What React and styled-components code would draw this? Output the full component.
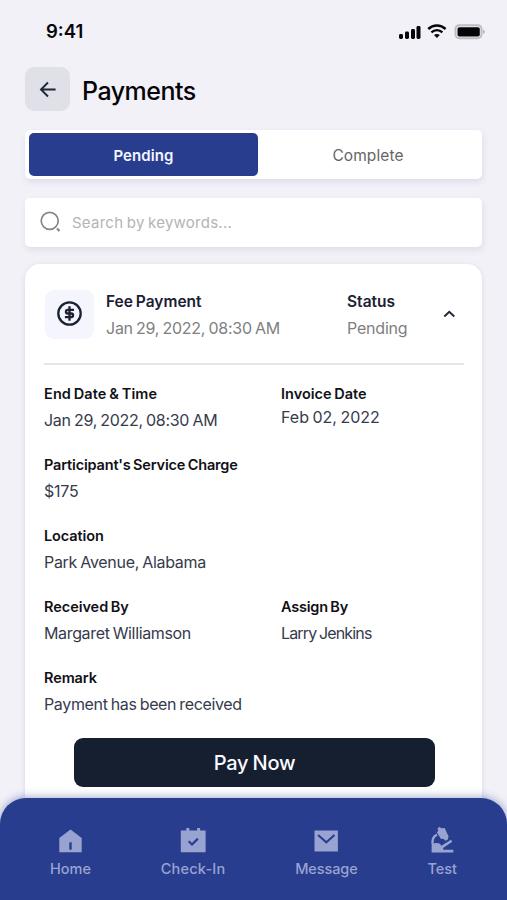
import React, { useState } from "react";
import styled, { createGlobalStyle } from "styled-components";

const GlobalStyle = createGlobalStyle`
  * {
    box-sizing: border-box;
  }

  body {
    margin: 0;
    background-color: #f2f1f8;
    font-family: Inter, "Open Sans", sans-serif;
  }

  button, input {
    font-family: inherit;
  }
`;

const Screen = styled.div`
  position: relative;
  width: 507px;
  height: 900px;
  padding: 0 25px;
  overflow: hidden;
  background-color: #f2f1f8;
`;

const StatusBar = styled.div`
  display: flex;
  justify-content: space-between;
  align-items: center;
  height: 67px;
  padding: 0 0 4px 21px;
  margin-right: -4px;
`;

const Clock = styled.span`
  margin-top: -1px;
  font-size: 18.5px;
  font-weight: 600;
  color: #08080c;
`;

const StatusIcons = styled.svg`
  display: block;
  margin-right: 1px;
`;

const Header = styled.header`
  display: flex;
  align-items: center;
  gap: 12px;
  height: 44px;
`;

const BackButton = styled.button`
  display: flex;
  align-items: center;
  justify-content: center;
  width: 45px;
  height: 44px;
  padding: 0;
  border: none;
  border-radius: 9px;
  background-color: #dfe0e8;
`;

const Title = styled.h1`
  margin: 3px 0 0;
  font-size: 25px;
  line-height: 30px;
  font-weight: 550;
  letter-spacing: -0.5px;
  color: #050508;
`;

const Tabs = styled.div`
  display: flex;
  height: 49px;
  margin-top: 19px;
  padding: 3px 4px;
  border-radius: 5px;
  background-color: #fff;
  box-shadow: 1px 3px 6px rgba(60, 60, 90, 0.1);
`;

const Tab = styled.button`
  flex: ${({ $active }) => ($active ? "0 0 229px" : "1")};
  padding: 1px 0 0;
  border: none;
  border-radius: 5px;
  font-size: ${({ $active }) => ($active ? 15 : 15.5)}px;
  font-weight: ${({ $active }) => ($active ? 600 : 400)};
  letter-spacing: 0.1px;
  color: ${({ $active }) => ($active ? "#f4f5ff" : "#666")};
  background-color: ${({ $active }) => ($active ? "#293d8f" : "transparent")};
`;

const SearchBox = styled.label`
  display: flex;
  align-items: center;
  gap: 10px;
  height: 49px;
  margin-top: 19px;
  padding: 0 15px 1px;
  border-radius: 5px;
  background-color: #fff;
  box-shadow: 1px 3px 6px rgba(60, 60, 90, 0.1);
`;

const SearchInput = styled.input`
  flex: 1;
  padding: 0;
  border: none;
  outline: none;
  font-size: 15px;
  letter-spacing: 0.25px;
  word-spacing: -1px;
  background: transparent;

  &::placeholder {
    color: #b4b4b4;
    opacity: 1;
  }
`;

const Card = styled.section`
  height: 640px;
  margin-top: 17px;
  padding: 24px 18px 0 19px;
  border-radius: 15px;
  background-color: #fff;
  box-shadow: 0 1px 5px rgba(60, 60, 90, 0.12);
`;

const CardHeader = styled.div`
  display: grid;
  grid-template-columns: 61px 241px 1fr auto;
  align-items: center;
  height: 77px;
  padding: 0 8px 22px 1px;
  border-bottom: 2px solid #e6e6ea;
`;

const IconBox = styled.div`
  display: flex;
  align-items: center;
  justify-content: center;
  width: 49px;
  height: 49px;
  margin-top: -2px;
  border-radius: 9px;
  background-color: #f5f6fd;
`;

const Chevron = styled.svg`
  display: block;
  margin-top: -2px;
`;

const HeaderTitle = styled.div`
  font-size: 15.5px;
  line-height: 27px;
  font-weight: 600;
  letter-spacing: ${({ $ls }) => $ls || 0}px;
  word-spacing: -1px;
  color: #1b2033;
`;

const HeaderText = styled.div`
  font-size: 16px;
  line-height: 27px;
  letter-spacing: ${({ $ls }) => $ls || 0}px;
  word-spacing: -1px;
  color: #808080;
`;

const Details = styled.div`
  display: grid;
  grid-template-columns: 237px 1fr;
  row-gap: 19px;
  padding-top: 16px;
`;

const Field = styled.div`
  grid-column: ${({ $wide }) => ($wide ? "1 / -1" : "auto")};
  height: 52px;
`;

const Label = styled.div`
  font-size: 14.5px;
  line-height: 26px;
  font-weight: 600;
  letter-spacing: ${({ $ls }) => $ls || 0}px;
  word-spacing: -1px;
  color: #111116;
`;

const Value = styled.div`
  font-size: 16px;
  line-height: ${({ $tight }) => ($tight ? 20 : 26)}px;
  letter-spacing: ${({ $ls }) => $ls || 0}px;
  word-spacing: -1px;
  color: #363b4c;
`;

const PayButton = styled.button`
  display: block;
  width: 361px;
  height: 49px;
  margin: 21px 0 0 30px;
  padding: 0;
  border: none;
  border-radius: 9px;
  font-size: 20px;
  font-weight: 500;
  letter-spacing: -0.2px;
  word-spacing: -1px;
  color: #fafaff;
  background-color: #151f30;
`;

const BottomNav = styled.nav`
  position: absolute;
  left: 0;
  right: 0;
  bottom: 0;
  display: flex;
  justify-content: space-between;
  height: 102px;
  padding: 27px 50px 0;
  border-radius: 26px 26px 0 0;
  background-color: #293d8f;
  box-shadow: 0 -1px 8px rgba(41, 61, 143, 0.45);
`;

const NavItem = styled.a`
  display: flex;
  flex-direction: column;
  align-items: center;
  font-size: 14.5px;
  line-height: 20px;
  font-weight: 500;
  letter-spacing: ${({ $ls }) => $ls || 0}px;
  color: #99a3d2;

  svg {
    display: block;
    margin-bottom: 6px;
  }
`;

const fields = [
  { label: "End Date & Time", value: "Jan 29, 2022, 08:30 AM", labelLs: 0.1, valueLs: -0.28 },
  { label: "Invoice Date", value: "Feb 02, 2022", valueLs: 0, tight: true },
  { label: "Participant's Service Charge", value: "$175", wide: true, labelLs: -0.17, valueLs: -0.2 },
  { label: "Location", value: "Park Avenue, Alabama", wide: true, labelLs: -0.1, valueLs: -0.3 },
  { label: "Received By", value: "Margaret Williamson", labelLs: -0.05, valueLs: -0.35 },
  { label: "Assign By", value: "Larry Jenkins", labelLs: -0.2, valueLs: -0.85 },
  { label: "Remark", value: "Payment has been received", wide: true, labelLs: -0.1, valueLs: -0.35 },
];

const HomeIcon = () => (
  <svg width="26" height="28" viewBox="0 0 26 28" fill="none">
    <path d="M13.5 4.5 24.7 13v14.3H2.3V13z" fill="#99a3d2" />
    <path d="M12.3 17.3h2.4v7.4h-2.4z" fill="#293d8f" />
  </svg>
);

const CheckInIcon = () => (
  <svg width="26" height="28" viewBox="0 0 26 28" fill="none">
    <path d="M.8 5.5h5.5V3h3v2.5h7.8V3h3v2.5h5.5v21.8H.8z" fill="#99a3d2" />
    <path d="m8.7 16.3 3.3 3.2 5.9-5.9" stroke="#293d8f" strokeWidth="2.2" />
  </svg>
);

const MessageIcon = () => (
  <svg width="26" height="28" viewBox="0 0 26 28" fill="none">
    <path d="M1.5 5.5h23.4v21H1.5z" fill="#99a3d2" />
    <path d="m5.1 9.9 8.2 7.4 8.2-7.4" stroke="#293d8f" strokeWidth="2" />
  </svg>
);

const TestIcon = () => (
  <svg width="26" height="28" viewBox="0 0 26 28" fill="none">
    <path
      d="m8.6 3.2 2.2-1.4 1.2 1.4 3.6-.2 4 8.6-1 3.2-2.2 1-1.6-1.8-3-.2-4-6.6L9.2 6z"
      fill="#99a3d2"
    />
    <path d="M8 9.6C3.2 11.6 2.8 16 4 21" stroke="#99a3d2" strokeWidth="2.3" />
    <path
      d="M2.6 21.5c.4-2.6 2.5-3.8 5.4-3.6 2.2.1 3.6 1.2 4.4 2.8l9.6-6 1.3 2.1-9.2 6.2.2 1.7h10v2.9H2.6z"
      fill="#99a3d2"
    />
  </svg>
);

const PhoneStatus = () => (
  <StatusIcons width="87" height="18" viewBox="0 0 87 18" fill="none">
    <g fill="#07070b">
      <rect x="1" y="11" width="4" height="5" rx="1.4" />
      <rect x="7" y="8.5" width="4" height="7.5" rx="1.4" />
      <rect x="13" y="6" width="4" height="10" rx="1.4" />
      <rect x="18.5" y="3" width="4" height="13" rx="1.4" />
    </g>
    <path d="M30.2 6c5-4.7 12.4-4.7 17.4 0" stroke="#07070b" strokeWidth="2.5" />
    <path d="M33.4 9.4c3.2-3 7.8-3 11 0" stroke="#07070b" strokeWidth="2.3" />
    <path d="M36 12c1.8-1.4 4-1.4 5.8 0L38.9 15z" fill="#07070b" />
    <rect x="57.5" y="2.2" width="26" height="13" rx="3.7" fill="#f2f1f8" stroke="#bdbdc2" strokeWidth="2" />
    <rect x="59.5" y="4.2" width="22.3" height="9.3" rx="1.8" fill="#050508" />
    <path d="M85.2 6.5c2 .8 2 3.6 0 4.4z" fill="#aaaab0" />
  </StatusIcons>
);

const App = () => {
  const [tab, setTab] = useState("pending");
  const [open, setOpen] = useState(true);

  return (
    <>
      <GlobalStyle />
      <Screen>
        <StatusBar>
          <Clock>9:41</Clock>
          <PhoneStatus />
        </StatusBar>
        <Header>
          <BackButton aria-label="Back">
            <svg width="18" height="18" viewBox="0 0 18 18" fill="none" stroke="#20263a" strokeWidth="1.9">
              <path d="M16.6 9.5H2.3M9 2.5l-7 7 7 7" />
            </svg>
          </BackButton>
          <Title>Payments</Title>
        </Header>

        <Tabs>
          <Tab $active={tab === "pending"} onClick={() => setTab("pending")}>
            Pending
          </Tab>
          <Tab $active={tab === "complete"} onClick={() => setTab("complete")}>
            Complete
          </Tab>
        </Tabs>

        <SearchBox>
          <svg width="22" height="22" viewBox="0 0 22 22" fill="none" stroke="#858585" strokeWidth="1.7">
            <circle cx="9.7" cy="9.8" r="8.5" />
            <path d="m17 17.5 2.5 2.5" strokeWidth="2.2" />
          </svg>
          <SearchInput placeholder="Search by keywords..." />
        </SearchBox>

        <Card>
          {/* card header */}
          <CardHeader>
            <IconBox>
              <svg width="26" height="26" viewBox="0 0 26 26" fill="none" stroke="#1a2133" strokeWidth="2.3">
                <circle cx="12.5" cy="12.5" r="11.2" />
                <path d="M17 8.8h-6.2a1.85 1.85 0 0 0 0 3.7h3.4a1.85 1.85 0 0 1 0 3.7H7.9M12.5 5.3v14.4" />
              </svg>
            </IconBox>
            <div>
              <HeaderTitle>Fee Payment</HeaderTitle>
              <HeaderText $ls={-0.25}>Jan 29, 2022, 08:30 AM</HeaderText>
            </div>
            <div>
              <HeaderTitle>Status</HeaderTitle>
              <HeaderText $ls={-0.2}>Pending</HeaderText>
            </div>
            <Chevron
              width="14"
              height="10"
              viewBox="0 0 14 10"
              fill="none"
              stroke="#20263a"
              strokeWidth="1.9"
              onClick={() => setOpen(!open)}
            >
              <path d="m2.3 7.5 5-4.7 5 4.7" />
            </Chevron>
          </CardHeader>

          {/* card details */}
          {open && (
            <>
              <Details>
                {fields.map((f) => (
                  <Field key={f.label} $wide={f.wide}>
                    <Label $ls={f.labelLs}>{f.label}</Label>
                    <Value $ls={f.valueLs} $tight={f.tight}>
                      {f.value}
                    </Value>
                  </Field>
                ))}
              </Details>
              <PayButton>Pay Now</PayButton>
            </>
          )}
        </Card>

        <BottomNav>
          <NavItem>
            <HomeIcon />
            Home
          </NavItem>
          <NavItem $ls={0.2}>
            <CheckInIcon />
            Check-In
          </NavItem>
          <NavItem $ls={-0.1}>
            <MessageIcon />
            Message
          </NavItem>
          <NavItem>
            <TestIcon />
            Test
          </NavItem>
        </BottomNav>
      </Screen>
    </>
  );
};

export default App;
